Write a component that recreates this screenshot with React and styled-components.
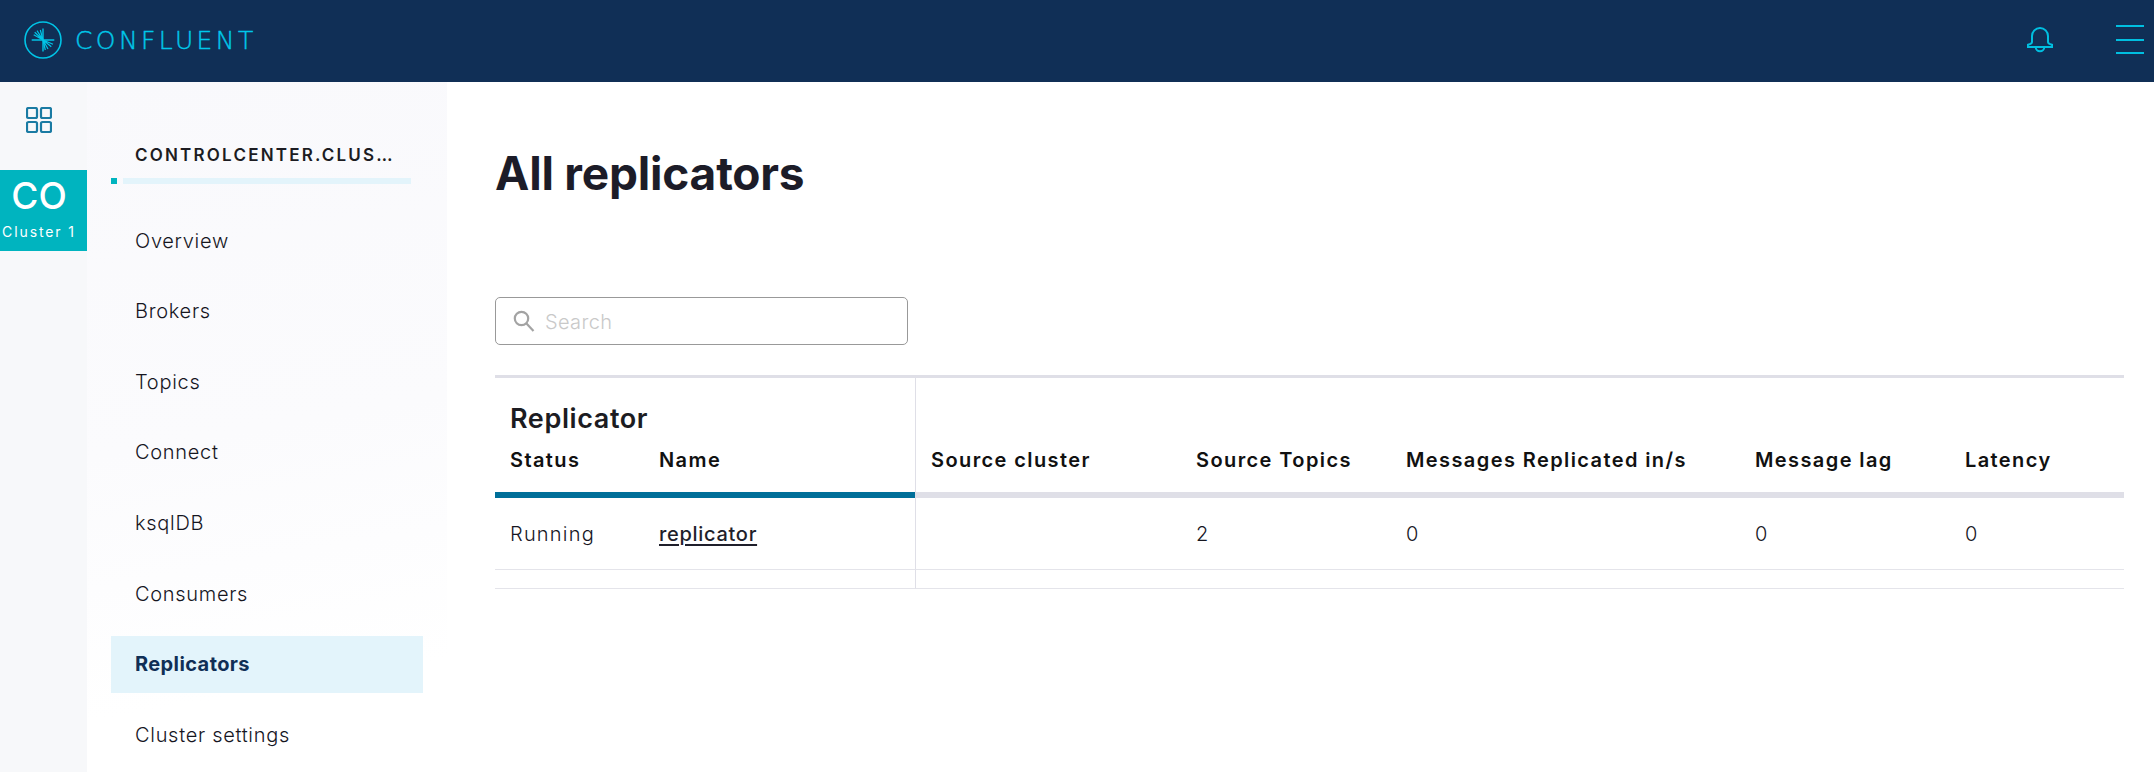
import React from 'react';
import styled, { createGlobalStyle } from 'styled-components';

const navItems = ['Overview', 'Brokers', 'Topics', 'Connect', 'ksqlDB', 'Consumers', 'Replicators', 'Cluster settings'];

const columns = [
  { label: 'Status', width: 149 },
  { label: 'Name', width: 271 },
  { label: 'Source cluster', width: 266, divided: true },
  { label: 'Source Topics', width: 210 },
  { label: 'Messages Replicated in/s', width: 349 },
  { label: 'Message lag', width: 210 },
  { label: 'Latency', width: 174 },
];

const Logo = () => (
  <svg width="40" height="40" viewBox="0 0 40 40" fill="none" stroke="#00c4e6">
    <circle cx="20" cy="20" r="18" strokeWidth="1.6" />
    <path strokeWidth="1.4" d="M20 8.500v23M8.700 20h22.600" />
    <path strokeWidth="1.2" d="M20 20l-9.300-5.300M20 20l-8.300-7.700M20 20l-6-9.300M20 20l-2.700-10M20 20l10 4.300M20 20l8.300 6.700M20 20l5 9M20 20l2.300 10" />
  </svg>
);

const Bell = () => (
  <svg width="26" height="28" viewBox="0 0 26 28" fill="none" stroke="#00bfe0" strokeWidth="2">
    <path d="M5 15V9a8 8 0 0 1 16 0v6c0 1.400 1 2 4 2.800v2.200H1v-2.200c3-.8 4-1.400 4-2.800z" />
    <path d="M8.700 20a4.300 4.300 0 0 0 8.600 0" />
  </svg>
);

const Grid = () => (
  <svg width="26" height="26" viewBox="0 0 26 26" fill="none" stroke="#1a7ba3" strokeWidth="2.200">
    <rect x="1" y="1" width="10" height="10" rx="1.500" />
    <rect x="15" y="1" width="10" height="10" rx="1.500" />
    <rect x="1" y="15" width="10" height="10" rx="1.500" />
    <rect x="15" y="15" width="10" height="10" rx="1.500" />
  </svg>
);

const SearchGlyph = () => (
  <svg width="22" height="23" viewBox="0 0 22 23" fill="none" stroke="#a3a3a3" strokeWidth="2.200">
    <circle cx="8.500" cy="8.500" r="6.700" />
    <path d="M13.500 13.500l7 7.500" />
  </svg>
);

const App = () => {
  return (
    <>
      <GlobalStyle />
      <Page>
        <Header>
          <Brand>
            <Logo />
            <BrandName>CONFLUENT</BrandName>
          </Brand>
          <HeaderActions>
            <Bell />
            <Burger>
              <span />
              <span />
              <span />
            </Burger>
          </HeaderActions>
        </Header>

        <Body>
          <Rail>
            <RailIcon>
              <Grid />
            </RailIcon>
            <ClusterTile>
              <strong>CO</strong>
              <span>Cluster 1</span>
            </ClusterTile>
          </Rail>

          <SideNav>
            <ClusterName>CONTROLCENTER.CLUS…</ClusterName>
            <Rule>
              <i />
              <b />
            </Rule>
            <NavList>
              {navItems.map((item) => (
                <NavItem key={item} $active={item === 'Replicators'}>
                  {item}
                </NavItem>
              ))}
            </NavList>
          </SideNav>

          <Main>
            <Title>All replicators</Title>
            <SearchBox>
              <SearchGlyph />
              <SearchInput placeholder="Search" />
            </SearchBox>

            <Table>
              <colgroup>
                {columns.map((col) => (
                  <col key={col.label} style={{ width: col.width }} />
                ))}
              </colgroup>
              <thead>
                <tr>
                  <GroupCell colSpan={2}>Replicator</GroupCell>
                  <GroupCell colSpan={5} $divided />
                </tr>
                <tr>
                  {columns.map((col, i) => (
                    <HeadCell key={col.label} $accent={i < 2} $divided={col.divided}>
                      {col.label}
                    </HeadCell>
                  ))}
                </tr>
              </thead>
              <tbody>
                <tr>
                  <Cell>Running</Cell>
                  <Cell>
                    <NameLink href="#">replicator</NameLink>
                  </Cell>
                  <Cell $divided />
                  <Cell>2</Cell>
                  <Cell>0</Cell>
                  <Cell>0</Cell>
                  <Cell>0</Cell>
                </tr>
                <tr>
                  <SpacerCell colSpan={2} />
                  <SpacerCell colSpan={5} $divided />
                </tr>
              </tbody>
            </Table>
          </Main>
        </Body>
      </Page>
    </>
  );
};

const GlobalStyle = createGlobalStyle`
  * {
    box-sizing: border-box;
  }

  html, body {
    margin: 0;
    height: 100%;
    overflow: hidden;
    background: #fff;
    font-family: Inter, "Liberation Sans", sans-serif;
    color: #1f1f2b;
  }
`;

const Page = styled.div`
  width: 2154px;
  height: 772px;
  display: flex;
  flex-direction: column;
  overflow: hidden;
`;

const Header = styled.header`
  height: 82px;
  flex: none;
  background: #102f56;
  display: flex;
  align-items: center;
  justify-content: space-between;
  padding: 0 10px 0 23px;
`;

const Brand = styled.div`
  display: flex;
  align-items: center;
  gap: 12px;
  margin-top: -2px;
`;

const BrandName = styled.span`
  font-family: "DejaVu Sans", sans-serif;
  font-size: 25px;
  font-weight: 200;
  letter-spacing: 3.400px;
  color: #00c8ea;
  -webkit-text-stroke: 0.400px #00c8ea;
`;

const HeaderActions = styled.div`
  display: flex;
  align-items: center;
  gap: 63px;
`;

const Burger = styled.div`
  width: 28px;
  display: flex;
  flex-direction: column;
  gap: 11.500px;
  margin-top: -3px;

  span {
    display: block;
    height: 2px;
    background: #00bfe0;
  }
`;

const Body = styled.div`
  flex: 1;
  display: flex;
  min-height: 0;
`;

const Rail = styled.aside`
  width: 87px;
  flex: none;
  background: #f7f8fa;
`;

const RailIcon = styled.div`
  height: 88px;
  display: flex;
  justify-content: center;
  padding: 25px 10px 0 0;
`;

const ClusterTile = styled.div`
  height: 81px;
  background: #00b4bf;
  color: #fff;
  padding-right: 9px;
  display: flex;
  flex-direction: column;
  align-items: center;

  strong {
    font-size: 37px;
    font-weight: 500;
    line-height: 40px;
    margin-top: 6px;
  }

  span {
    font-size: 14px;
    line-height: 18px;
    letter-spacing: 1.900px;
    margin-top: 7px;
    white-space: nowrap;
  }
`;

const SideNav = styled.nav`
  width: 360px;
  flex: none;
  background: linear-gradient(170deg, #f9f9fc 0%, #fbfbfd 50%, #fff 85%);
  padding: 63px 24px 0;
`;

const ClusterName = styled.div`
  font-size: 17px;
  font-weight: 600;
  letter-spacing: 2.200px;
  line-height: 21px;
  padding-left: 24px;
  color: #1c1c22;
`;

const Rule = styled.div`
  display: flex;
  gap: 6px;
  margin-top: 12px;
  width: 300px;

  i {
    width: 6px;
    height: 6px;
    background: #00b4bf;
  }

  b {
    flex: 1;
    height: 6px;
    background: #e3f4fb;
  }
`;

const NavList = styled.ul`
  list-style: none;
  margin: 28px 0 0;
  padding: 0;
  display: flex;
  flex-direction: column;
  gap: 13.650px;
`;

const NavItem = styled.li`
  width: 312px;
  height: 57px;
  flex: none;
  display: flex;
  align-items: center;
  padding-left: 24px;
  font-size: 20px;
  letter-spacing: ${(p) => (p.$active ? '0.4px' : '0.7px')};
  font-weight: ${(p) => (p.$active ? 700 : 300)};
  color: ${(p) => (p.$active ? '#102f56' : '#16161f')};
  background: ${(p) => (p.$active ? '#e3f4fb' : 'transparent')};
`;

const Main = styled.main`
  flex: 1;
  min-width: 0;
  padding: 62px 30px 0 48px;
`;

const Title = styled.h1`
  margin: 0;
  font-size: 46px;
  font-weight: 700;
  letter-spacing: -0.200px;
  line-height: 58px;
  color: #1c1c28;
`;

const SearchBox = styled.label`
  width: 413px;
  height: 48px;
  margin-top: 95px;
  padding: 0 16px 0 17px;
  display: flex;
  align-items: center;
  gap: 10px;
  border: 1px solid #999;
  border-radius: 5px;
`;

const SearchInput = styled.input`
  flex: 1;
  min-width: 0;
  border: 0;
  outline: 0;
  padding: 1px 0 0;
  background: none;
  font-family: inherit;
  font-size: 20px;
  font-weight: 300;
  letter-spacing: 0.35px;

  &::placeholder {
    color: #c9c9c9;
    opacity: 1;
  }
`;

const Table = styled.table`
  width: 1629px;
  margin-top: 30px;
  table-layout: fixed;
  border-collapse: separate;
  border-spacing: 0;
  border-top: 3px solid #dfdfe7;
`;

const dividerLine = (p) => (p.$divided ? 'border-left: 1px solid #dfdfe7;' : '');

const GroupCell = styled.th`
  height: 54px;
  padding: 26px 15px 0;
  text-align: left;
  font-size: 27px;
  font-weight: 600;
  letter-spacing: 0.600px;
  line-height: 30px;
  color: #1c1c22;
  ${dividerLine}
`;

const HeadCell = styled.th`
  height: 64px;
  padding: 0 15px 7px;
  text-align: left;
  vertical-align: middle;
  font-size: 20px;
  font-weight: 600;
  letter-spacing: 1.400px;
  color: #111;
  white-space: nowrap;
  border-bottom: 6px solid ${(p) => (p.$accent ? '#006f99' : '#dfdfe7')};
  ${dividerLine}
`;

const Cell = styled.td`
  height: 72px;
  padding: 0 15px;
  font-size: 20px;
  font-weight: 300;
  letter-spacing: 1.200px;
  color: #16161f;
  border-bottom: 1px solid #e4e4ea;
  ${dividerLine}
`;

const SpacerCell = styled.td`
  height: 19px;
  padding: 0;
  border-bottom: 1px solid #e4e4ea;
  ${dividerLine}
`;

const NameLink = styled.a`
  color: #1f1f2b;
  font-weight: 500;
  letter-spacing: 0.700px;
  text-decoration: underline;
  text-underline-offset: 3px;
`;

export default App;
